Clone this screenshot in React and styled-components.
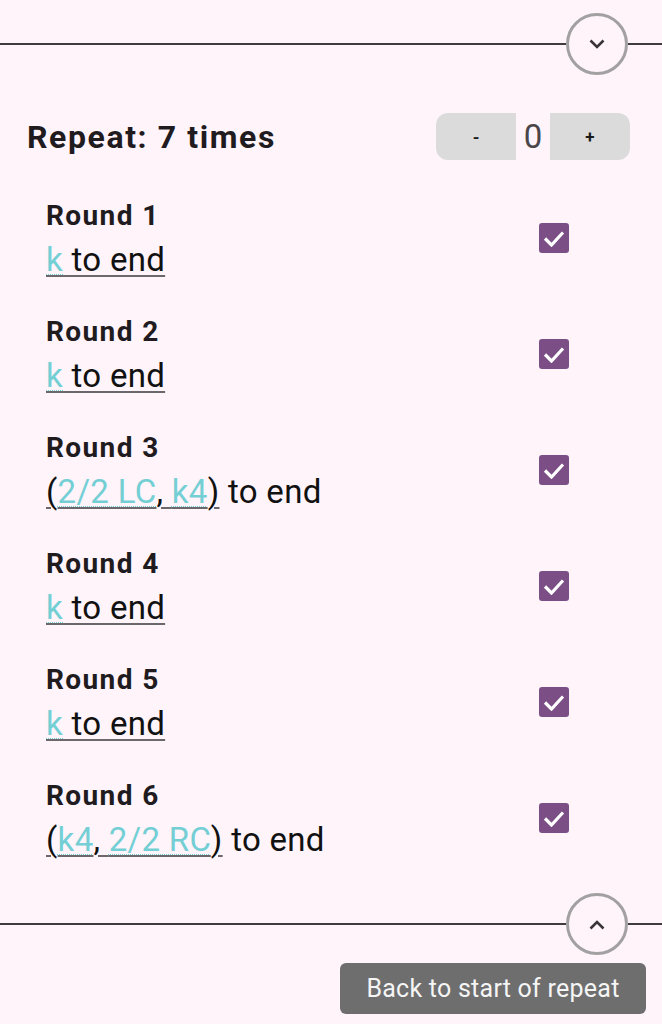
import React from "react";
import styled, { createGlobalStyle } from "styled-components";

const Global = createGlobalStyle`
  html, body {
    margin: 0;
    padding: 0;
    background: #fef4fa;
    font-family: Roboto, "Noto Sans", sans-serif;
    color: #1f1b1e;
  }
`;

const Page = styled.div`
  width: 662px;
  min-height: 1024px;
  display: flex;
  flex-direction: column;
`;

const Divider = styled.div`
  display: flex;
  align-items: center;
  height: 62px;
  margin-top: ${(p) => p.$top}px;
`;

const Line = styled.div`
  flex: ${(p) => (p.$fixed ? `0 0 ${p.$fixed}px` : "1")};
  height: 2px;
  background: #3f3a3e;
`;

const Circle = styled.button`
  width: 62px;
  height: 62px;
  border-radius: 50%;
  border: 3px solid #a3a0a2;
  background: #fef4fa;
  box-sizing: border-box;
  display: flex;
  align-items: center;
  justify-content: center;
  padding: 0;
`;

const Header = styled.div`
  display: flex;
  align-items: center;
  justify-content: space-between;
  padding: 0 32px 0 27px;
  margin-top: 38px;
`;

const Title = styled.div`
  font-size: 32px;
  font-weight: 700;
  letter-spacing: 1.6px;
`;

const Stepper = styled.div`
  display: flex;
  align-items: center;
  height: 47px;
`;

const StepBtn = styled.button`
  width: 80px;
  height: 47px;
  border: none;
  background: #dcdbdc;
  font-family: Roboto, sans-serif;
  font-size: 17px;
  font-weight: 700;
  color: #1a1a1a;
  border-radius: ${(p) => (p.$side === "left" ? "12px 0 0 12px" : "0 12px 12px 0")};
`;

const Count = styled.div`
  width: 34px;
  text-align: center;
  font-size: 33px;
  color: #4a464a;
`;

const List = styled.div`
  display: flex;
  flex-direction: column;
  gap: 36px;
  margin-top: 38px;
  padding: 0 93px 0 46px;
`;

const Row = styled.div`
  display: flex;
  align-items: center;
  justify-content: space-between;
`;

const RowText = styled.div`
  display: flex;
  flex-direction: column;
`;

const RoundName = styled.div`
  font-size: 28px;
  font-weight: 700;
  line-height: 36px;
  letter-spacing: 1.4px;
`;

const Instr = styled.div`
  font-size: 33px;
  line-height: 36px;
  padding-top: 8px;
  letter-spacing: 0.3px;
  color: #111;
`;

const Under = styled.span`
  text-decoration: underline;
  text-decoration-color: #6b676a;
  text-decoration-thickness: 2px;
  text-underline-offset: 4px;
`;

const Stitch = styled.a`
  color: #74cfd5;
  text-decoration: underline dotted;
  text-decoration-color: #74cfd5;
  text-decoration-thickness: 1px;
  text-underline-offset: 3px;
`;

const Check = styled.div`
  width: 30px;
  height: 30px;
  border-radius: 3px;
  background: #7b4f86;
  display: flex;
  align-items: center;
  justify-content: center;
`;

const Footer = styled.div`
  display: flex;
  justify-content: flex-end;
  padding: 8px 16px 0 0;
`;

const BackBtn = styled.button`
  width: 306px;
  height: 51px;
  border: none;
  border-radius: 6px;
  background: #6f6e6f;
  color: #f5f5f5;
  font-family: Roboto, sans-serif;
  font-size: 25px;
  letter-spacing: 0.25px;
`;

const Chevron = ({ up }) => (
  <svg width="18" height="11" viewBox="0 0 18 11">
    <path
      d={up ? "M2.5 9.5 L9 3 L15.5 9.5" : "M2.5 1.5 L9 8 L15.5 1.5"}
      fill="none"
      stroke="#3a3439"
      strokeWidth="2.6"
    />
  </svg>
);

const Tick = () => (
  <svg width="22" height="17" viewBox="0 0 22 17">
    <path d="M2 8.5 L8.5 15 L20 2.5" fill="none" stroke="#fff" strokeWidth="3.2" />
  </svg>
);

const rounds = [
  { n: 1, kind: "k" },
  { n: 2, kind: "k" },
  { n: 3, kind: "pair", a: "2/2 LC", b: "k4" },
  { n: 4, kind: "k" },
  { n: 5, kind: "k" },
  { n: 6, kind: "pair", a: "k4", b: "2/2 RC" },
];

function Instruction({ r }) {
  if (r.kind === "k") {
    return (
      <Instr>
        <Under>
          <Stitch>k</Stitch> to end
        </Under>
      </Instr>
    );
  }
  return (
    <Instr>
      <Under>
        (<Stitch>{r.a}</Stitch>, <Stitch>{r.b}</Stitch>)
      </Under>{" "}
      to end
    </Instr>
  );
}

export default function App() {
  return (
    <Page>
      <Global />
      <Divider $top={13}>
        <Line />
        <Circle>
          <Chevron />
        </Circle>
        <Line $fixed={34} />
      </Divider>
      <Header>
        <Title>Repeat: 7 times</Title>
        <Stepper>
          <StepBtn $side="left">-</StepBtn>
          <Count>0</Count>
          <StepBtn $side="right">+</StepBtn>
        </Stepper>
      </Header>
      <List>
        {rounds.map((r) => (
          <Row key={r.n}>
            <RowText>
              <RoundName>Round {r.n}</RoundName>
              <Instruction r={r} />
            </RowText>
            <Check>
              <Tick />
            </Check>
          </Row>
        ))}
      </List>
      <Divider $top={35}>
        <Line />
        <Circle>
          <Chevron up />
        </Circle>
        <Line $fixed={34} />
      </Divider>
      <Footer>
        <BackBtn>Back to start of repeat</BackBtn>
      </Footer>
    </Page>
  );
}
